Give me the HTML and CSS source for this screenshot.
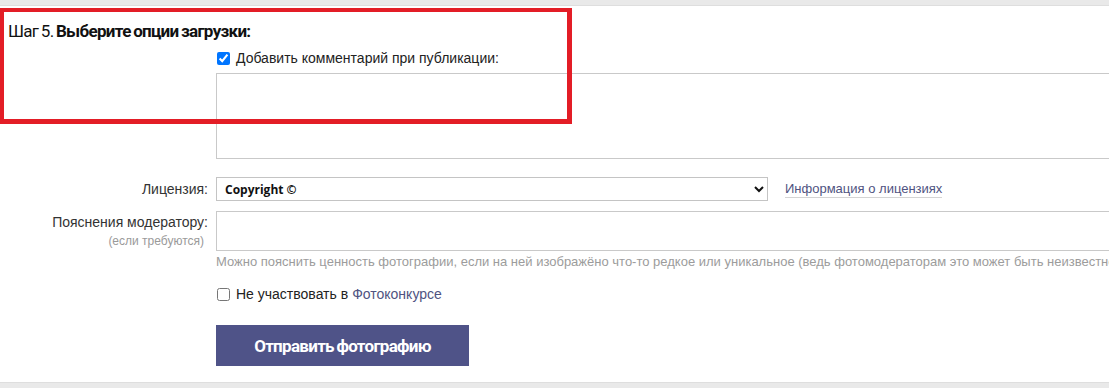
FILE: index.html
```html
<!DOCTYPE html>
<html lang="ru">
<head>
<meta charset="utf-8">
<title>Загрузка фотографии</title>
<link rel="stylesheet" href="styles.css">
</head>
<body>
	<div class="topband"></div>
	<div class="step">
		<h2 class="step-title">Шаг 5. <b>Выберите опции загрузки:</b></h2>
		<div class="mark"></div>

		<div class="form">
			<div class="lbl"></div>
			<div class="fld">
				<label class="check"><input type="checkbox" checked> Добавить комментарий при публикации:</label>
				<textarea class="comment"></textarea>
			</div>

			<div class="lbl lbl-lic">Лицензия:</div>
			<div class="fld fld-lic">
				<select class="lic">
					<option>Copyright ©</option>
				</select>
				<a href="javascript:;" class="lic-info">Информация о лицензиях</a>
			</div>

			<div class="lbl lbl-mod">Пояснения модератору:<span class="sub">(если требуются)</span></div>
			<div class="fld">
				<textarea class="mod"></textarea>
				<div class="hint">Можно пояснить ценность фотографии, если на ней изображёно что-то редкое или уникальное (ведь фотомодераторам это может быть неизвестно)</div>
			</div>

			<div class="lbl"></div>
			<div class="fld">
				<label class="check check-contest"><input type="checkbox"> Не участвовать в <a href="javascript:;">Фотоконкурсе</a></label>
				<button class="send">Отправить фотографию</button>
			</div>
		</div>
	</div>
	<div class="bottomband"></div>
</body>
</html>
```

FILE: styles.css
```css
body{ margin:0; padding:0; background:#fff; font-family:"Liberation Sans", Arial, sans-serif; font-size:14px; color:#222; overflow:hidden; width:1109px; }
.topband{ height:5px; background:#e9e9e9; border-bottom:1px solid #dedede; }
.step{ position:relative; padding:14px 0 16px; }
.step-title{ margin:0 0 0 8px; font-family:Roboto, "Liberation Sans", sans-serif; font-size:17px; line-height:22px; font-weight:normal; letter-spacing:-0.7px; word-spacing:-1px; color:#111; }
.step-title b{ font-weight:bold; }
.mark{ position:absolute; left:0; top:2px; width:563px; height:107px; border:4px solid #e31d26; border-right-width:5px; border-bottom-width:5px; pointer-events:none; }

.form{ display:grid; grid-template-columns:208px 1fr; column-gap:8px; }
.lbl{ text-align:right; color:#333; font-size:14px; }
.fld{ min-width:0; }

.check{ display:flex; align-items:center; height:20px; margin-top:6px; color:#222; white-space:nowrap; }
.check input{ width:13px; height:13px; margin:0 6px 0 1px; }
.comment{ display:block; box-sizing:border-box; width:1000px; height:86px; margin:5px 0 18px; border:1px solid #c9c9c9; border-radius:0; resize:none; }

.lbl-lic{ line-height:24px; }
.fld-lic{ display:flex; align-items:center; margin-bottom:10px; }
.lic{ box-sizing:border-box; width:552px; height:24px; border:1px solid #c4c4c4; border-radius:0; background:#fff; padding:0 4px; font-family:"Open Sans", sans-serif; font-size:12px; font-weight:bold; color:#111; }
.lic-info{ margin-left:17px; color:#4f5381; text-decoration:none; border-bottom:1px solid #d4d4d4; line-height:17px; font-size:13px; }

.lbl-mod{ padding-top:2px; line-height:18px; }
.lbl-mod .sub{ display:block; color:#9a9a9a; font-size:12px; line-height:20px; padding-right:4px; }
.mod{ display:block; box-sizing:border-box; width:1000px; height:40px; margin:0; border:1px solid #c9c9c9; border-radius:0; resize:none; }
.hint{ color:#9c9c9c; font-size:13px; white-space:nowrap; margin-top:3px; line-height:16px; }

.check-contest{ margin-top:14px; }
.check-contest a{ color:#4f5381; text-decoration:none; margin-left:4px; }
.send{ display:block; margin-top:21px; width:253px; height:41px; border:0; background:#4f5388; color:#fff; font-family:Roboto, "Liberation Sans", sans-serif; font-weight:bold; font-size:17px; letter-spacing:-0.7px; word-spacing:-1px; cursor:pointer; }

.bottomband{ height:8px; background:#e9e9e9; border-top:1px solid #dedede; }
```
